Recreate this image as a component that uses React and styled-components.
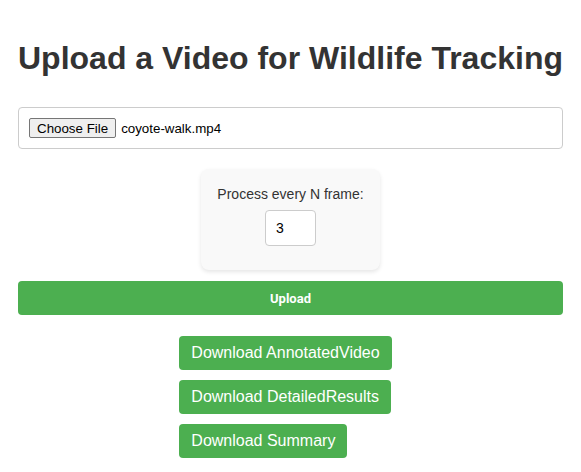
import React from "react";
import styled, { createGlobalStyle } from "styled-components";

const GlobalStyle = createGlobalStyle`
  body {
    margin: 0;
    background: #fff;
    font-family: "Liberation Sans", Arial, sans-serif;
  }
`;

const Page = styled.div`
  padding: 18px 18px;
  display: flex;
  flex-direction: column;
`;

const Title = styled.h1`
  margin: 22px 0 30px;
  font-size: 32px;
  font-weight: bold;
  color: #333;
  text-align: center;
`;

const FileBox = styled.div`
  border: 1px solid #ccc;
  border-radius: 4px;
  padding: 10px 9px;
  display: flex;
  align-items: center;
  font-size: 13.33px;
  color: #000;
`;

const ChooseButton = styled.button`
  font-family: "Liberation Sans", Arial, sans-serif;
  font-size: 13.33px;
  padding: 1px 7px;
  height: 20px;
  background: #efefef;
  border: 1px solid #767676;
  border-radius: 2px;
  margin: 0 5px 0 1px;
  color: #000;
`;

const Card = styled.div`
  align-self: center;
  margin-top: 20px;
  background: #f9f9f9;
  border-radius: 8px;
  box-shadow: 0 2px 4px rgba(0, 0, 0, 0.1);
  padding: 17px 16px 24px;
  display: flex;
  flex-direction: column;
  align-items: center;
  gap: 8px;
`;

const Label = styled.label`
  font-size: 14px;
  color: #333;
`;

const NumberInput = styled.input`
  width: 51px;
  height: 36px;
  box-sizing: border-box;
  border: 1px solid #ccc;
  border-radius: 4px;
  padding: 0 10px;
  font-family: "Liberation Sans", Arial, sans-serif;
  font-size: 14px;
  color: #000;
  background: #fff;
`;

const UploadButton = styled.button`
  margin-top: 11px;
  height: 34px;
  background: #4caf50;
  color: #fff;
  border: none;
  border-radius: 4px;
  font-family: Roboto, "Liberation Sans", sans-serif;
  font-weight: bold;
  font-size: 13px;
`;

const Downloads = styled.div`
  align-self: center;
  margin: 21px 10px 0 0;
  display: flex;
  flex-direction: column;
  align-items: flex-start;
  gap: 10px;
`;

const DownloadButton = styled.a`
  display: inline-block;
  background: #4caf50;
  color: #fff;
  border-radius: 4px;
  padding: 0 12px;
  height: 34px;
  line-height: 34px;
  font-size: 16px;
  text-decoration: none;
`;

export default function App() {
  return (
    <>
      <GlobalStyle />
      <Page>
        <Title>Upload a Video for Wildlife Tracking</Title>
        <FileBox>
          <ChooseButton>Choose File</ChooseButton>
          <span>coyote-walk.mp4</span>
        </FileBox>
        <Card>
          <Label>Process every N frame:</Label>
          <NumberInput type="text" defaultValue="3" />
        </Card>
        <UploadButton>Upload</UploadButton>
        <Downloads>
          <DownloadButton href="#">Download AnnotatedVideo</DownloadButton>
          <DownloadButton href="#">Download DetailedResults</DownloadButton>
          <DownloadButton href="#">Download Summary</DownloadButton>
        </Downloads>
      </Page>
    </>
  );
}
